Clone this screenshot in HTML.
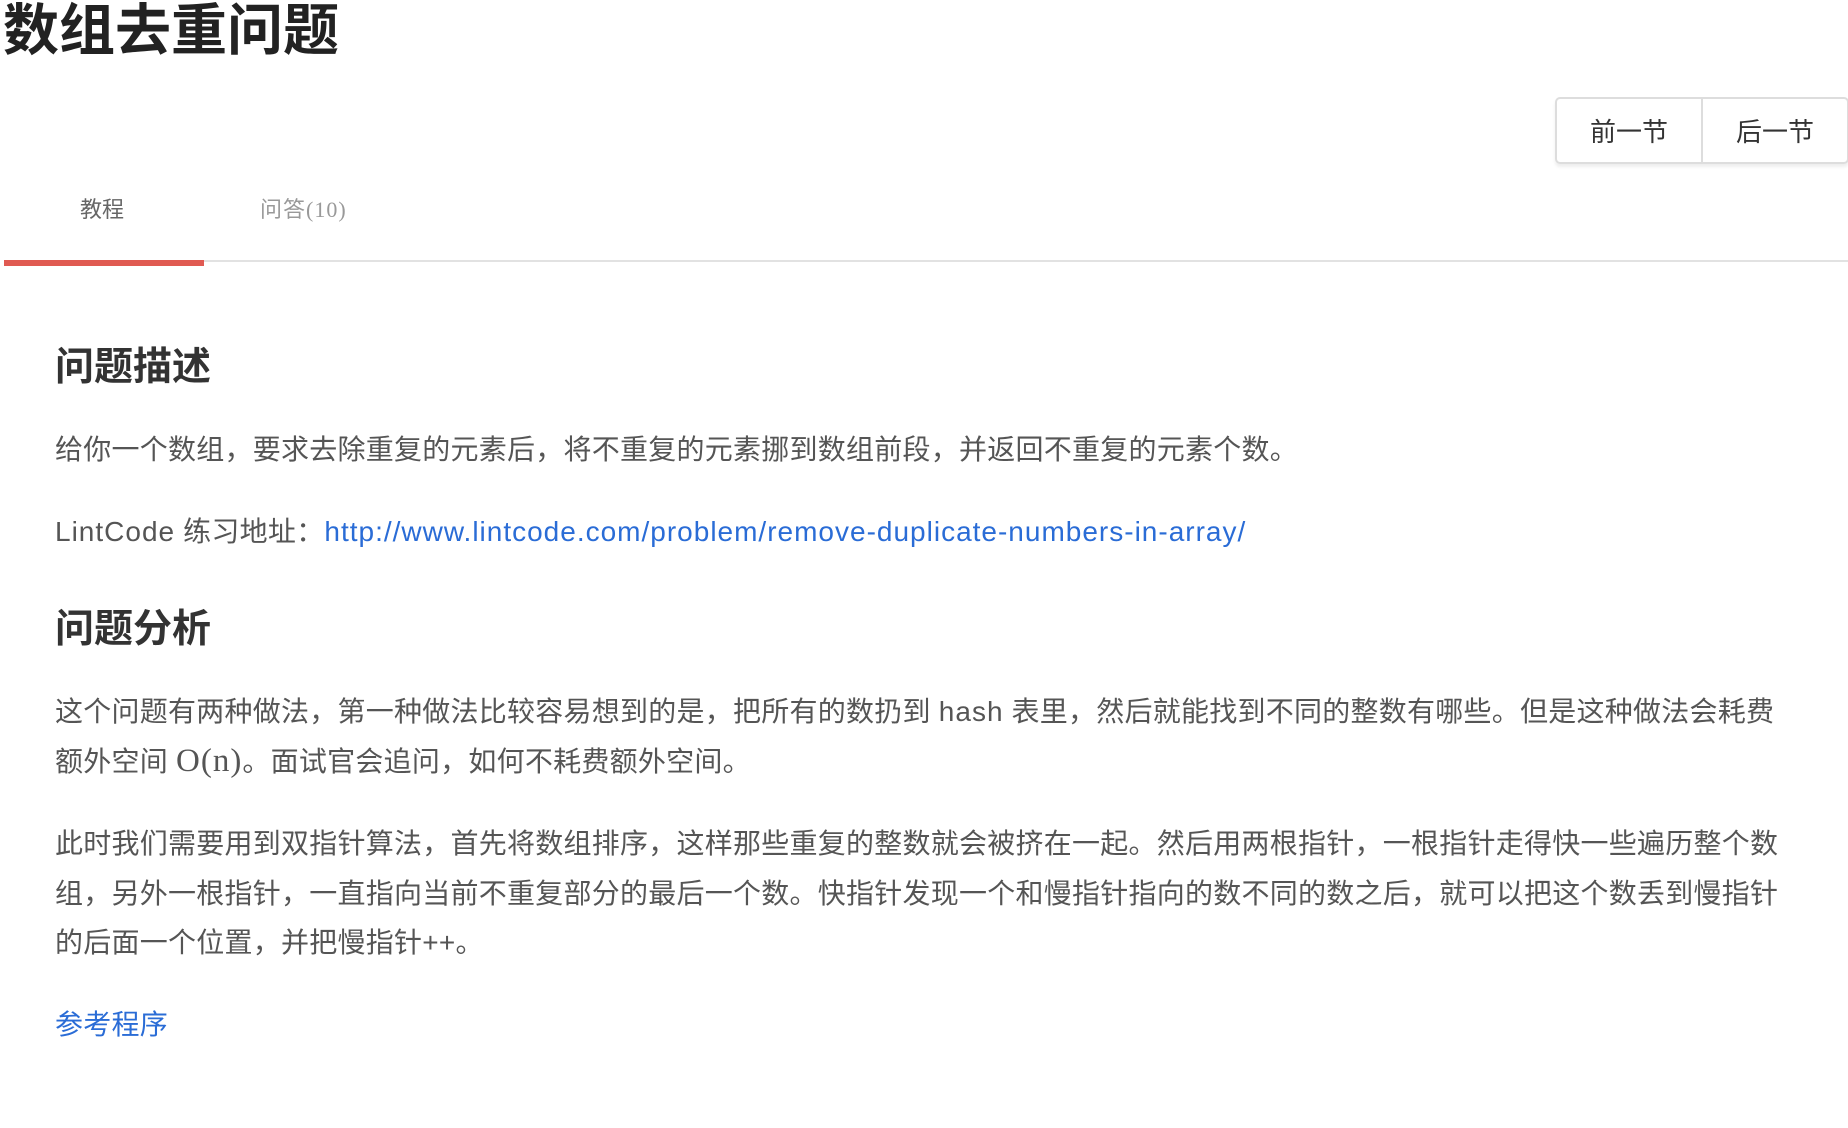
<!DOCTYPE html>
<html><head><meta charset="utf-8"><style>
body{margin:0;width:1848px;height:1128px;background:#fff;overflow:hidden;font-family:"Liberation Sans","Noto Sans CJK SC",sans-serif;color:#555;position:relative}
h1{position:absolute;left:3px;top:-4px;margin:0;font-size:56px;font-weight:bold;color:#222;line-height:70px}
.btns{position:absolute;left:1555px;top:97px;width:290px;height:63px;border:2px solid #ddd;border-radius:5px;display:flex;box-shadow:0 3px 3px #eee}
.btns div{flex:1;display:flex;align-items:center;justify-content:center;font-size:26px;color:#333}
.btns div+div{border-left:2px solid #ddd}
.tab{position:absolute;top:194px;font-size:22px;line-height:32px}
.line{position:absolute;left:4px;top:260px;width:1844px;height:2px;background:#e2e2e2}
.red{position:absolute;left:4px;top:260px;width:200px;height:6px;background:#e05a52}
h2{position:absolute;left:55px;margin:0;font-size:39px;font-weight:bold;color:#333;line-height:50px}
p{position:absolute;left:55px;margin:0;width:1790px;font-size:28px;line-height:49.5px;white-space:nowrap;letter-spacing:0.25px}
a{color:#2a6cd6;text-decoration:none}
.l{letter-spacing:1px}
.m{font-family:"Liberation Serif",serif;font-size:33px;letter-spacing:1px}
</style></head><body>
<h1>数组去重问题</h1>
<div class="btns"><div>前一节</div><div>后一节</div></div>
<div class="tab" style="left:80px;color:#666">教程</div>
<div class="tab" style="left:260px;color:#999;font-family:'Liberation Serif','Noto Sans CJK SC',serif;letter-spacing:1px">问答(10)</div>
<div class="line"></div><div class="red"></div>
<h2 style="top:343px">问题描述</h2>
<p style="top:425px">给你一个数组，要求去除重复的元素后，将不重复的元素挪到数组前段，并返回不重复的元素个数。</p>
<p style="top:507px"><span class="l">LintCode</span> 练习地址：<a class="l">http://www.lintcode.com/problem/remove-duplicate-numbers-in-array/</a></p>
<h2 style="top:605px">问题分析</h2>
<p style="top:687px">这个问题有两种做法，第一种做法比较容易想到的是，把所有的数扔到 <span class="l">hash</span> 表里，然后就能找到不同的整数有哪些。但是这种做法会耗费<br>额外空间 <span class="m">O(n)</span>。面试官会追问，如何不耗费额外空间。</p>
<p style="top:819px">此时我们需要用到双指针算法，首先将数组排序，这样那些重复的整数就会被挤在一起。然后用两根指针，一根指针走得快一些遍历整个数<br>组，另外一根指针，一直指向当前不重复部分的最后一个数。快指针发现一个和慢指针指向的数不同的数之后，就可以把这个数丢到慢指针<br>的后面一个位置，并把慢指针++。</p>
<p style="top:1000px"><a>参考程序</a></p>
</body></html>
